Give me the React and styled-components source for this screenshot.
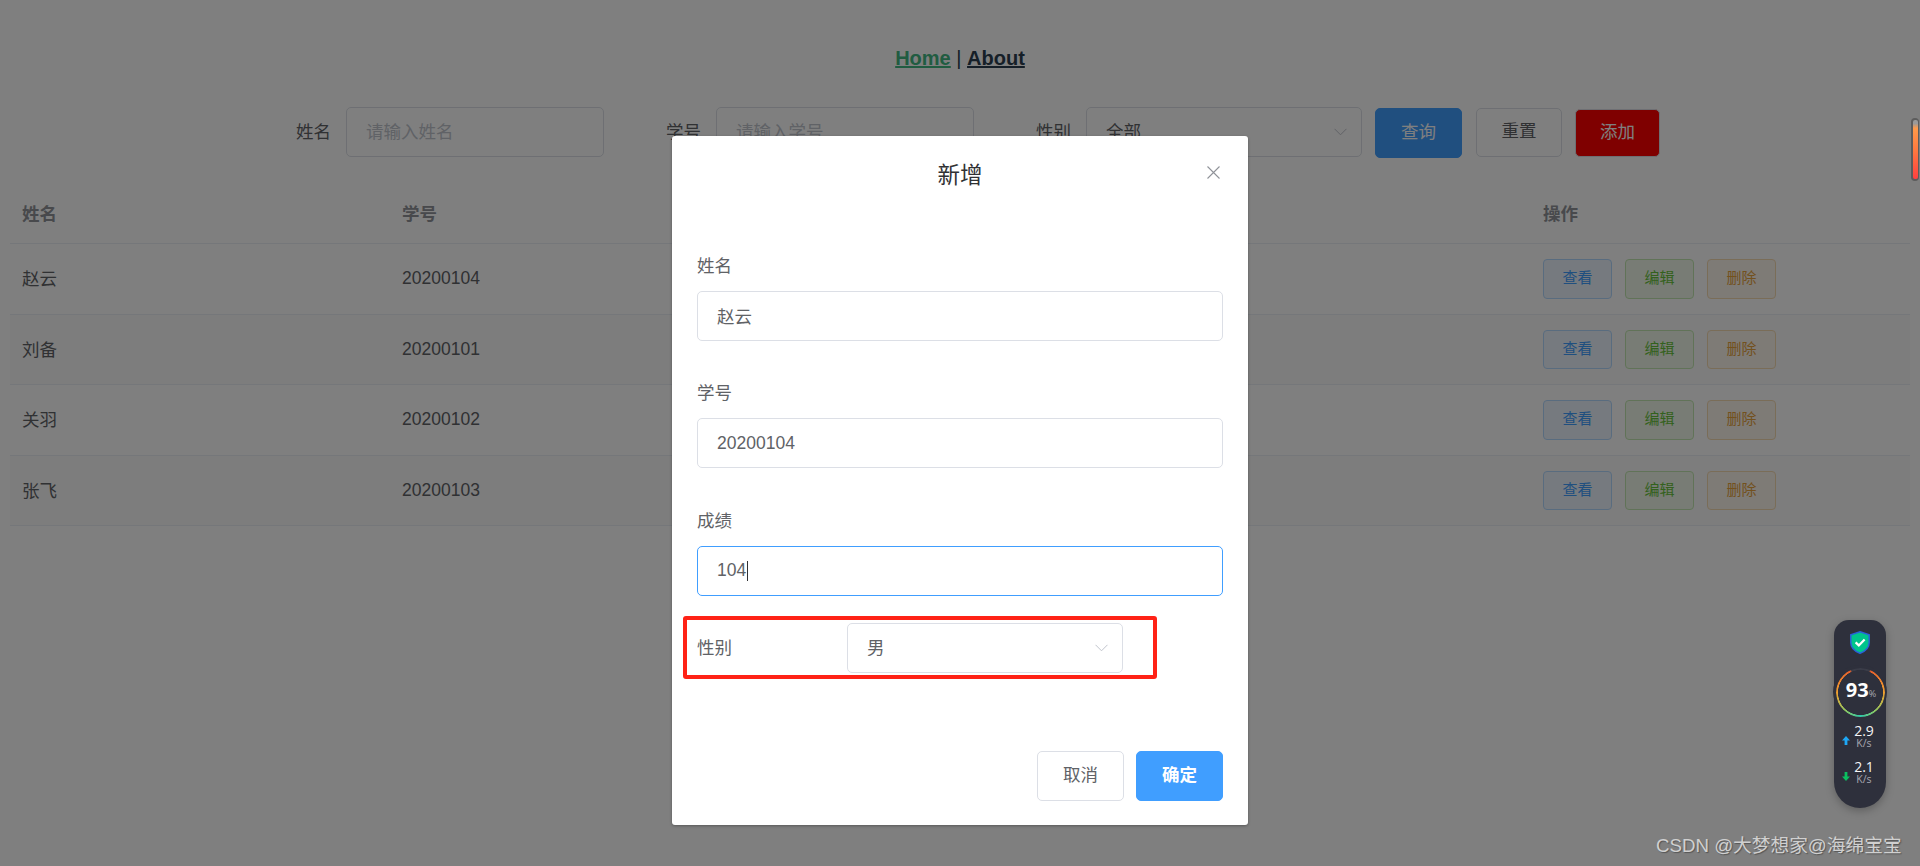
import React from "react";
import styled, { createGlobalStyle } from "styled-components";

const SANS = `"Liberation Sans", "Noto Sans CJK SC", sans-serif`;

const Global = createGlobalStyle`
  html, body { margin: 0; padding: 0; height: 866px; background: #fff; overflow: hidden; }
  body { font-family: ${SANS}; }
  * { box-sizing: border-box; }
`;

const Page = styled.div`
  position: relative;
  width: 1920px;
  height: 866px;
  overflow: hidden;
  background: #fff;
  color: #606266;
`;

const Nav = styled.nav`
  padding-top: 47px;
  height: 107px;
  text-align: center;
  font-size: 20px;
  line-height: 23px;
  color: #2c3e50;
`;

const NavLink = styled.a`
  font-weight: 700;
  text-decoration: underline;
  color: ${(p) => (p.$active ? "#42b983" : "#2c3e50")};
`;

const SearchBar = styled.form`
  display: flex;
  align-items: flex-start;
  height: 50px;
  padding-left: 296px;
`;

const SearchItem = styled.div`
  display: flex;
  align-items: center;
  gap: 15px;
  margin-right: ${(p) => p.$gap}px;
`;

const SearchLabel = styled.label`
  font-size: 17.5px;
  line-height: 50px;
  white-space: nowrap;
`;

const TextInput = styled.input`
  display: block;
  width: ${(p) => p.$width || "100%"};
  height: 50px;
  padding: 0 19px;
  border: 1px solid ${(p) => (p.$focused ? "#409eff" : "#dcdfe6")};
  border-radius: 5px;
  background: #fff;
  outline: none;
  font-family: ${SANS};
  font-size: 17.5px;
  color: #606266;
  &::placeholder { color: #c0c4cc; opacity: 1; }
`;

const SelectBox = styled.div`
  display: flex;
  align-items: center;
  justify-content: space-between;
  flex: none;
  width: ${(p) => p.$width};
  height: 50px;
  padding: 0 14px 0 19px;
  border: 1px solid #dcdfe6;
  border-radius: 5px;
  background: #fff;
  font-size: 17.5px;
  line-height: 46px;
  color: #606266;
`;

const Button = styled.button`
  flex: none;
  width: ${(p) => p.$width}px;
  height: ${(p) => p.$height}px;
  margin-top: ${(p) => p.$top || 0}px;
  margin-right: ${(p) => p.$right || 0}px;
  padding: 0 0 3px;
  border: 1px solid ${(p) => p.$border};
  border-radius: 5px;
  background: ${(p) => p.$bg};
  color: ${(p) => p.$color};
  font-family: ${SANS};
  font-size: 17.5px;
  line-height: 22px;
  font-weight: ${(p) => p.$weight || 400};
`;

const Table = styled.div`
  margin: 25px 10px 0;
  width: 1900px;
`;

const HeadRow = styled.div`
  display: grid;
  grid-template-columns: repeat(5, 380px);
  align-items: center;
  height: 62px;
  border-bottom: 1px solid #ebeef5;
  font-size: 17.5px;
  font-weight: 700;
  color: #909399;
`;

const BodyRow = styled.div`
  display: grid;
  grid-template-columns: repeat(5, 380px);
  align-items: center;
  height: 70.6px;
  border-bottom: 1px solid #ebeef5;
  background: ${(p) => (p.$striped ? "#fafafa" : "#fff")};
  font-size: 17.5px;
  color: #606266;
`;

const Cell = styled.div`
  padding: 0 12px;
`;

const NameCell = styled(Cell)`
  padding-bottom: 2px;
`;

const ActionHead = styled(Cell)`
  padding-left: 13px;
`;

const ActionCell = styled(Cell)`
  display: flex;
  gap: 13px;
  padding-left: 13px;
`;

const TONES = {
  view: { bg: "#ecf5ff", border: "#b3d8ff", color: "#409eff" },
  edit: { bg: "#f0f9eb", border: "#c2e7b0", color: "#67c23a" },
  del: { bg: "#fdf6ec", border: "#f5dab1", color: "#e6a23c" },
};

const SmallButton = styled.button`
  width: 69px;
  height: 39.5px;
  padding: 0 0 1px;
  border: 1px solid ${(p) => TONES[p.$tone].border};
  border-radius: 4px;
  background: ${(p) => TONES[p.$tone].bg};
  color: ${(p) => TONES[p.$tone].color};
  font-family: ${SANS};
  font-size: 15px;
  line-height: 20px;
`;

const Overlay = styled.div`
  position: absolute;
  inset: 0;
  background: rgba(0, 0, 0, 0.5);
`;

const Dialog = styled.section`
  position: absolute;
  left: 672px;
  top: 136px;
  width: 576px;
  height: 689px;
  padding: 0 25px;
  border-radius: 3px;
  background: #fff;
  box-shadow: 0 1px 3px rgba(0, 0, 0, 0.3);
`;

const DialogHeader = styled.header`
  height: 104.5px;
  padding-top: 26px;
  text-align: center;
  font-size: 22.5px;
  line-height: 28px;
  color: #303133;
`;

const CloseIcon = styled.svg`
  position: absolute;
  top: 29.5px;
  right: 28.5px;
  width: 13px;
  height: 13px;
  stroke: #909399;
  stroke-width: 1.1;
  fill: none;
`;

const FormItem = styled.div`
  position: relative;
  margin-bottom: 27.5px;
`;

const FormLabel = styled.label`
  display: block;
  height: 50px;
  font-size: 17.5px;
  line-height: 50px;
  color: #606266;
`;

const Caret = styled.span`
  position: absolute;
  left: 50px;
  bottom: 15px;
  width: 1px;
  height: 20px;
  background: #303133;
`;

const InlineItem = styled.div`
  position: relative;
  display: flex;
  align-items: center;
`;

const InlineLabel = styled.label`
  flex: none;
  width: 150px;
  font-size: 17.5px;
  line-height: 46px;
  color: #606266;
`;

const Highlight = styled.div`
  position: absolute;
  left: -14.5px;
  top: -7px;
  width: 474px;
  height: 63px;
  border: 4px solid #ff2216;
  border-radius: 3px;
  pointer-events: none;
`;

const DialogFooter = styled.footer`
  display: flex;
  justify-content: flex-end;
  gap: 12px;
  margin-top: 78px;
`;

const ScrollPill = styled.div`
  position: absolute;
  left: 1911px;
  top: 118px;
  width: 8px;
  height: 63px;
  padding: 2px 1.5px;
  border-radius: 4px;
  background: #5c5c5c;
`;

const ScrollFill = styled.div`
  height: 100%;
  border-radius: 2px;
  background: linear-gradient(180deg, #9a9a9a 0 6%, #ff9a4a 14%, #ff7a40 50%, #ff4040 100%);
`;

const Watermark = styled.div`
  position: absolute;
  left: 1656px;
  top: 835px;
  font-size: 18.7px;
  line-height: 22px;
  white-space: nowrap;
  color: #d0d0d0;
  text-shadow: 1px 1px 1px #555;
`;

const Widget = styled.aside`
  position: absolute;
  left: 1834px;
  top: 620px;
  display: flex;
  flex-direction: column;
  align-items: center;
  width: 52px;
  height: 188px;
  padding-top: 11px;
  border-radius: 15px 15px 26px 26px;
  background: #2e303c;
  box-shadow: 0 3px 8px rgba(0, 0, 0, 0.25);
  font-family: "Open Sans", ${SANS};
`;

const RingWrap = styled.div`
  position: relative;
  flex: none;
  display: flex;
  align-items: center;
  justify-content: center;
  width: 54px;
  height: 54px;
  margin-top: 11px;
  border-radius: 50%;
  background: #2e303c;
`;

const Ring = styled.div`
  position: absolute;
  inset: 2.5px;
  border-radius: 50%;
  background: conic-gradient(
    #3a3c48 0deg 22deg,
    #e8602c 26deg,
    #f0a030 90deg,
    #90c860 140deg,
    #2fc8a8 180deg,
    #90c860 220deg,
    #f0a030 270deg,
    #e8602c 334deg,
    #3a3c48 338deg
  );
  -webkit-mask: radial-gradient(circle, transparent 22.2px, #000 22.8px);
  mask: radial-gradient(circle, transparent 22.2px, #000 22.8px);
`;

const Percent = styled.div`
  display: flex;
  align-items: baseline;
  margin-left: 2px;
  font-size: 20px;
  font-weight: 700;
  line-height: 22px;
  color: #fff;
`;

const PercentSign = styled.span`
  font-size: 9px;
  font-weight: 400;
  color: #a8a8b0;
`;

const Stat = styled.div`
  display: flex;
  align-items: center;
  gap: 4px;
  margin-top: ${(p) => p.$top}px;
  margin-right: 4px;
`;

const StatText = styled.div`
  display: flex;
  flex-direction: column;
  align-items: center;
`;

const StatValue = styled.span`
  font-size: 14px;
  font-weight: 400;
  line-height: 12px;
  color: #f4f4f6;
`;

const StatUnit = styled.span`
  font-size: 10.5px;
  line-height: 12px;
  color: #a8a8b0;
`;

const Chevron = () => (
  <svg width="13" height="8" viewBox="0 0 13 8" fill="none" stroke="#c0c4cc" strokeWidth="1">
    <path d="M0.5 0.8 L6.5 6.8 L12.5 0.8" />
  </svg>
);

const Shield = () => (
  <svg width="20" height="23" viewBox="0 0 20 23" style={{ flex: "none" }}>
    <path d="M10 0.8 L19.2 3.8 V11.5 C19.2 16.6 15 20.4 10 22.3 C5 20.4 0.8 16.6 0.8 11.5 V3.8 Z" fill="#00c48c" stroke="#2a62d8" strokeWidth="1.5" />
    <path d="M5.6 11.4 L8.8 14.4 L14.6 8.4" fill="none" stroke="#fff" strokeWidth="2.2" />
  </svg>
);

const Arrow = ({ color, down }) => (
  <svg width="8" height="9" viewBox="0 0 8 9" style={{ flex: "none", marginTop: 6, transform: down ? "rotate(180deg)" : "none" }}>
    <path d="M4 0 L8 4.6 H5.4 V9 H2.6 V4.6 H0 Z" fill={color} />
  </svg>
);

const rows = [
  ["赵云", "20200104"],
  ["刘备", "20200101"],
  ["关羽", "20200102"],
  ["张飞", "20200103"],
];

export default function App() {
  return (
    <Page>
      <Global />
      <Nav>
        <NavLink $active>Home</NavLink> | <NavLink>About</NavLink>
      </Nav>
      <SearchBar>
        <SearchItem $gap={62}>
          <SearchLabel>姓名</SearchLabel>
          <TextInput $width="258px" placeholder="请输入姓名" readOnly />
        </SearchItem>
        <SearchItem $gap={62}>
          <SearchLabel>学号</SearchLabel>
          <TextInput $width="258px" placeholder="请输入学号" readOnly />
        </SearchItem>
        <SearchItem $gap={13}>
          <SearchLabel>性别</SearchLabel>
          <SelectBox $width="276px">
            全部
            <Chevron />
          </SelectBox>
        </SearchItem>
        <Button type="button" $width={87} $height={50} $top={1} $right={14} $bg="#409eff" $border="#409eff" $color="#fff">查询</Button>
        <Button type="button" $width={86} $height={49} $top={1} $right={13} $bg="#fff" $border="#dcdfe6" $color="#606266">重置</Button>
        <Button type="button" $width={85} $height={48} $top={2} $bg="#ff0000" $border="#dcdfe6" $color="#fff">添加</Button>
      </SearchBar>
      <Table>
        <HeadRow>
          <Cell>姓名</Cell>
          <Cell>学号</Cell>
          <Cell>成绩</Cell>
          <Cell>性别</Cell>
          <ActionHead>操作</ActionHead>
        </HeadRow>
        {rows.map(([name, id], i) => (
          <BodyRow key={id} $striped={i % 2 === 1}>
            <NameCell>{name}</NameCell>
            <Cell>{id}</Cell>
            <Cell />
            <Cell />
            <ActionCell>
              <SmallButton type="button" $tone="view">查看</SmallButton>
              <SmallButton type="button" $tone="edit">编辑</SmallButton>
              <SmallButton type="button" $tone="del">删除</SmallButton>
            </ActionCell>
          </BodyRow>
        ))}
      </Table>

      <Overlay />

      <Dialog>
        <DialogHeader>新增</DialogHeader>
        <CloseIcon viewBox="0 0 13 13">
          <path d="M0.5 0.5 L12.5 12.5 M12.5 0.5 L0.5 12.5" />
        </CloseIcon>
        <FormItem>
          <FormLabel>姓名</FormLabel>
          <TextInput defaultValue="赵云" readOnly />
        </FormItem>
        <FormItem>
          <FormLabel>学号</FormLabel>
          <TextInput defaultValue="20200104" readOnly />
        </FormItem>
        <FormItem>
          <FormLabel>成绩</FormLabel>
          <TextInput $focused defaultValue="104" readOnly />
          <Caret />
        </FormItem>
        <InlineItem>
          <InlineLabel>性别</InlineLabel>
          <SelectBox $width="276px">
            男
            <Chevron />
          </SelectBox>
          <Highlight />
        </InlineItem>
        <DialogFooter>
          <Button type="button" $width={87} $height={50} $bg="#fff" $border="#dcdfe6" $color="#606266">取消</Button>
          <Button type="button" $width={87} $height={50} $bg="#409eff" $border="#409eff" $color="#fff" $weight={700}>确定</Button>
        </DialogFooter>
      </Dialog>

      <ScrollPill>
        <ScrollFill />
      </ScrollPill>

      <Widget>
        <Shield />
        <RingWrap>
          <Ring />
          <Percent>
            93<PercentSign>%</PercentSign>
          </Percent>
        </RingWrap>
        <Stat $top={6}>
          <Arrow color="#1ea7f5" />
          <StatText>
            <StatValue>2.9</StatValue>
            <StatUnit>K/s</StatUnit>
          </StatText>
        </Stat>
        <Stat $top={12}>
          <Arrow color="#0bc060" down />
          <StatText>
            <StatValue>2.1</StatValue>
            <StatUnit>K/s</StatUnit>
          </StatText>
        </Stat>
      </Widget>

      <Watermark>CSDN @大梦想家@海绵宝宝</Watermark>
    </Page>
  );
}
